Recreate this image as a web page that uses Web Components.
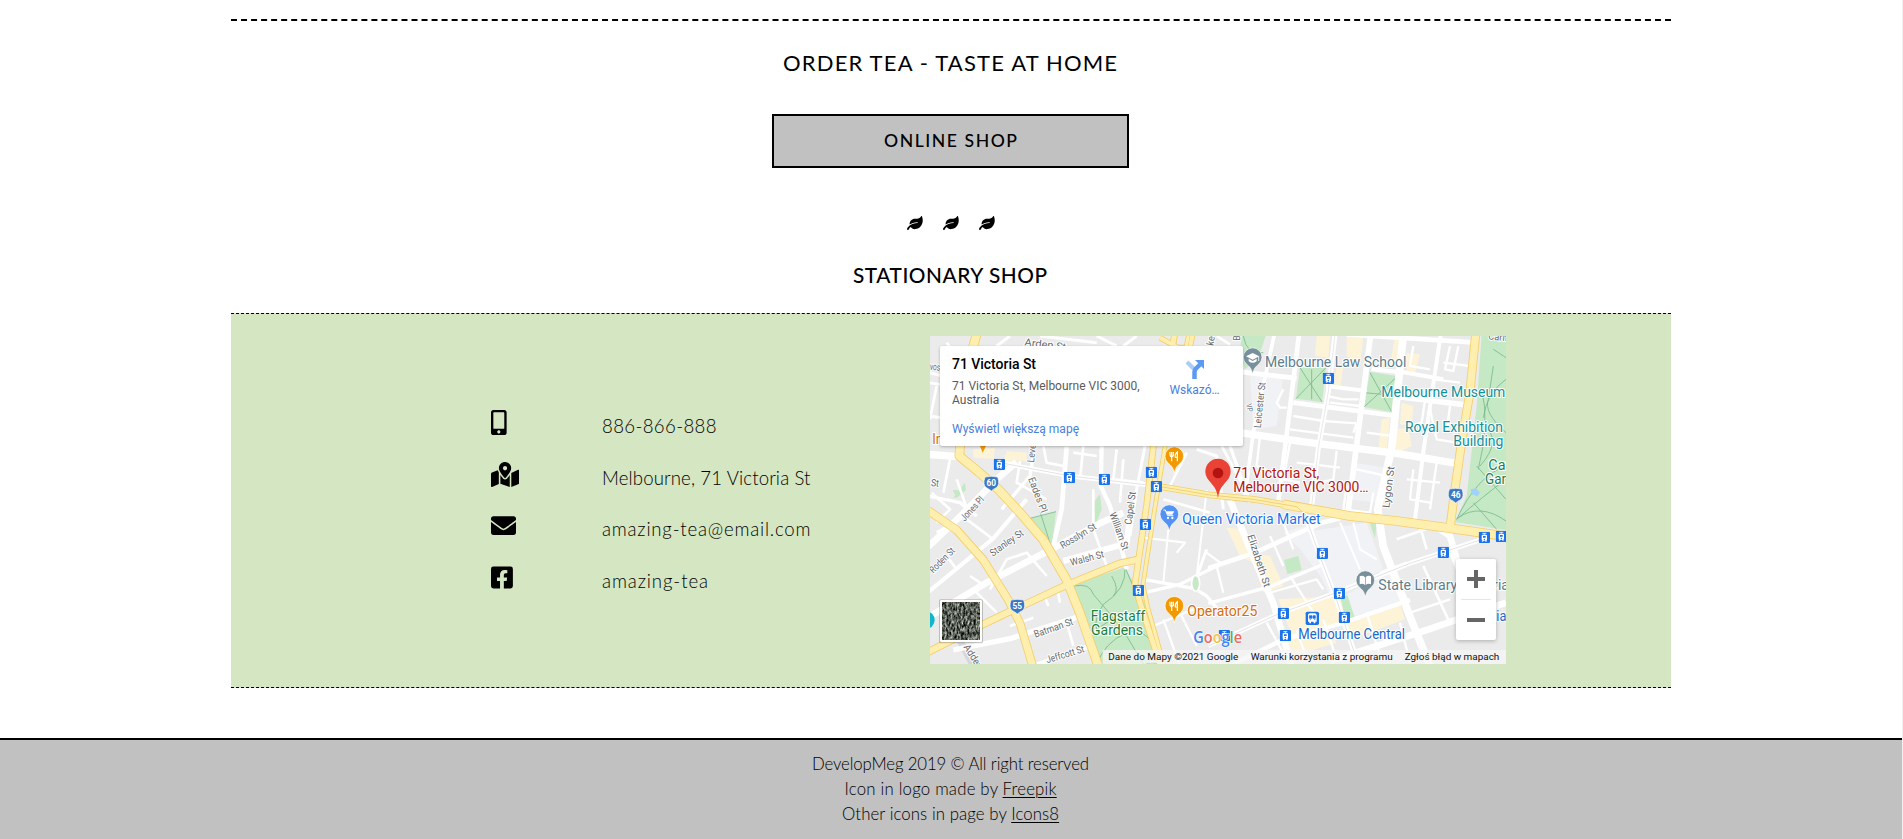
<!DOCTYPE html>
<html lang="en">
<head>
<meta charset="utf-8">
<title>Amazing Tea</title>
<style>
html{background:#fff}
body{margin:0;border-right:1px solid #f0f0f0;height:839px;overflow:hidden;font-family:Lato,"Open Sans",sans-serif;color:#000}
</style>
</head>
<body>
<tea-page></tea-page>
<script>
const define = (name, html, after) => customElements.define(name, class extends HTMLElement {
  connectedCallback() {
    if (this.shadowRoot) return;
    const t = document.createElement('template');
    t.innerHTML = html;
    this.attachShadow({mode: 'open'}).append(t.content.cloneNode(true));
    if (after) after(this, this.shadowRoot);
  }
});

// A single line of text tracked out to a given measure.
define('tea-line', `<style>:host{display:inline-block;white-space:nowrap}span{display:inline-block}</style><span><slot></slot></span>`,
  (host, root) => {
    const span = root.querySelector('span'), n = host.textContent.length, w = +host.getAttribute('measure');
    if (w) span.style.letterSpacing = ((w - span.getBoundingClientRect().width) / (n - 1)) + 'px';
    if (w) span.style.width = w + 'px';
  });

const ICONS = {
  leaf: ['0 0 576 512', 'M546.2 9.7c-5.6-12.5-21.6-13-28.3-1.2C486.9 62.4 431.4 96 368 96h-80C182 96 96 182 96 288c0 7 .8 13.7 1.5 20.5C161.3 262.8 253.4 224 384 224c8.8 0 16 7.2 16 16s-7.2 16-16 16C132.6 256 26 410.1 2.4 468c-6.6 16.3 1.2 34.9 17.5 41.6 16.4 6.8 35-1.1 41.8-17.3 1.5-3.6 20.9-47.9 71.9-90.6 32.4 43.9 94 85.8 174.9 77.2C465.5 467.5 576 326.7 576 154.3c0-50.2-10.8-102.2-29.8-144.6z'],
  phone: ['0 0 320 512', 'M272 0H48C21.5 0 0 21.5 0 48v416c0 26.5 21.5 48 48 48h224c26.5 0 48-21.5 48-48V48c0-26.5-21.5-48-48-48zM160 480c-17.7 0-32-14.3-32-32s14.3-32 32-32 32 14.3 32 32-14.3 32-32 32zm112-108c0 6.6-5.4 12-12 12H60c-6.6 0-12-5.4-12-12V60c0-6.6 5.4-12 12-12h200c6.6 0 12 5.4 12 12v312z'],
  map: ['0 0 576 512', 'M288 0c-69.59 0-126 56.41-126 126 0 56.26 82.35 158.8 113.9 196.02 6.39 7.54 17.82 7.54 24.2 0C331.65 284.8 414 182.26 414 126 414 56.41 357.59 0 288 0zm0 168c-23.2 0-42-18.8-42-42s18.8-42 42-42 42 18.8 42 42-18.8 42-42 42zM20.12 215.95A32.006 32.006 0 0 0 0 245.66v250.32c0 11.32 11.43 19.06 21.94 14.86L160 448V214.92c-8.84-15.98-16.07-31.54-21.25-46.42L20.12 215.95zM288 359.67c-14.07 0-27.38-6.18-36.51-16.96-19.66-23.2-40.57-49.62-59.49-76.72v182l192 64V266c-18.92 27.09-39.82 53.52-59.49 76.72-9.13 10.77-22.44 16.95-36.51 16.95zm266.06-198.51L416 224v288l139.88-55.95A31.996 31.996 0 0 0 576 426.34V176.02c0-11.32-11.43-19.06-21.94-14.86z'],
  mail: ['0 0 512 512', 'M502.3 190.8c3.9-3.1 9.7-.2 9.7 4.7V400c0 26.5-21.5 48-48 48H48c-26.5 0-48-21.5-48-48V195.6c0-5 5.7-7.8 9.7-4.7 22.4 17.4 52.1 39.5 154.1 113.6 21.1 15.4 56.7 47.8 92.2 47.6 35.7.3 72-32.8 92.3-47.6 102-74.1 131.6-96.3 154-113.7zM256 320c23.2.4 56.6-29.2 73.4-41.4 132.7-96.3 142.8-104.7 173.4-128.7 5.8-4.5 9.2-11.5 9.2-18.9v-19c0-26.5-21.5-48-48-48H48c-26.5 0-48 21.5-48 48v19c0 7.4 3.4 14.3 9.2 18.9 30.6 23.9 40.7 32.4 173.4 128.7 16.8 12.2 50.2 41.8 73.4 41.4z'],
  facebook: ['0 0 448 512', 'M400 32H48A48 48 0 0 0 0 80v352a48 48 0 0 0 48 48h137.25V327.69h-63V256h63v-54.64c0-62.15 37-96.48 93.67-96.48 27.14 0 55.52 4.84 55.52 4.84v61h-31.27c-30.81 0-40.42 19.12-40.42 38.73V256h68.78l-11 71.69h-57.78V480H400a48 48 0 0 0 48-48V80a48 48 0 0 0-48-48z']
};
define('tea-icon', `<style>:host{display:block}svg{display:block;height:var(--size,25px);width:auto}</style><svg><path/></svg>`,
  (host, root) => {
    const [box, d] = ICONS[host.getAttribute('name')];
    root.querySelector('svg').setAttribute('viewBox', box);
    root.querySelector('path').setAttribute('d', d);
  });

define('tea-contact', `<style>
:host{display:grid;grid-template-columns:111px auto;height:51.67px;align-items:start}
.t{font-size:18.6px;font-weight:300;line-height:24px;padding-top:4px;color:#000}
</style><div class="i"></div><div class="t"><slot></slot></div>`,
  (host, root) => {
    const icon = document.createElement('tea-icon');
    icon.setAttribute('name', host.getAttribute('icon'));
    root.querySelector('.i').append(icon);
  });

define('tea-footer', `<style>
:host{display:block;box-sizing:border-box;height:101px;border-top:2px solid #000;background:#c1c1c1;padding-top:11px;text-align:center;font-size:16.8px;font-weight:300;line-height:25px;color:#000}
div{height:25px;margin-left:-1px}a{text-decoration:underline;text-underline-offset:2px;text-decoration-thickness:1px}
</style>
<div><tea-line measure="277">DevelopMeg 2019 © All right reserved</tea-line></div>
<div><tea-line measure="212">Icon in logo made by <a>Freepik</a></tea-line></div>
<div><tea-line measure="217">Other icons in page by <a>Icons8</a></tea-line></div>`);

// Map vector layer: 3 drawing units per CSS pixel.
const line = (w, pts, c = '#fff') => `<polyline points="${pts}" fill="none" stroke="${c}" stroke-width="${w}" stroke-linejoin="round"/>`;
const poly = (c, ...l) => l.map(p => `<polygon points="${p}" fill="${c}"/>`).join('');
const tram = [[208,385],[418,425],[523,430],[664,409],[679,452],[646,565],[625,763],[1195,127],[1177,652],[1228,772],[1060,832],[1243,844],[1066,899],[1540,649],[1663,604],[1714,601],[883,899],[665,997]];
const label = (x, y, s, t, c, w, extra = '') => `<text x="${x}" y="${y}" font-size="${s}" fill="${c}" ${w ? `textLength="${w}" lengthAdjust="spacingAndGlyphs"` : ''} ${extra}>${t}</text>`;
const street = (x, y, a, t, w, s = 30) => `<text transform="translate(${x} ${y}) rotate(${a})" font-size="${s}" fill="#65696d" textLength="${w}" lengthAdjust="spacingAndGlyphs">${t}</text>`;
const pin = (x, y, c, g) => `<g transform="translate(${x} ${y})"><path d="M0 50C-3 33-9 27-19 19A28 28 0 1 1 19 19C9 27 3 33 0 50Z" fill="${c}" stroke="#fff" stroke-width="2"/>${g}</g>`;
const shield = (x, y, n) => `<g transform="translate(${x} ${y})"><path d="M-19-19Q0-23 19-19Q27 5 15 13Q5 18 0 23Q-5 18-15 13Q-27 5-19-19Z" fill="#3b78c3" stroke="#fff" stroke-width="2"/><text y="9" text-anchor="middle" font-size="25" font-weight="700" fill="#fff" stroke="none">${n}</text></g>`;
const yellow = [
  [24,'140,-5 130,30 90,330 88,360 145,407 205,460 270,530 340,612 410,732 450,832 505,990'],
  [21,'-5,524 80,582 160,672 235,792 270,862 308,990'],
  [18,'-5,948 40,925 155,867 260,817 410,747 570,682 628,670'],
  [15,'735,-10 670,332 650,507 615,745 630,800 692,990'],
  [9,'775,0 705,332 676,507 639,745 652,810 703,990'],
  [12,'690,5 745,35 780,35 788,-5'],
  [15,'680,450 840,477 970,490 1100,512'],
  [24,'1060,505 1260,540 1400,555 1560,577 1735,602'],
  [22,'1637,-5 1620,167 1595,317 1572,480 1560,577']
];
const fork = '<path d="M-8-14V-2M-3-14V-2M-13-14V-5Q-13 0-8 0T-3-5M-8 0V14M9 14V-14Q1-8 3 2H9" fill="none" stroke="#fff" stroke-width="3.5"/>';
const MAP = `
<svg viewBox="0 0 1728 984" width="576" height="328" font-family="Roboto,sans-serif">
<defs>
<symbol id="tram" viewBox="0 0 34 34"><rect width="34" height="34" rx="4" fill="#1a73e8"/><path d="M11 5H23M17 5V9" stroke="#fff" stroke-width="2.6"/><path fill="#fff" fill-rule="evenodd" d="M12 9H22Q25 9 25 12V25Q25 27 22 27L25 30H21L19 27H15L13 30H9L12 27Q9 27 9 25V12Q9 9 12 9ZM13 13V18H21V13ZM17 21A2 2 0 1 0 17.1 21Z"/></symbol>
<filter id="aerial" x="0" y="0" width="1" height="1" color-interpolation-filters="sRGB"><feTurbulence type="fractalNoise" baseFrequency=".16 .08" numOctaves="4" seed="8"/><feColorMatrix values="1.3 .5 0 0 -.55  1.3 .5 0 0 -.53  1.25 .5 0 0 -.54  0 0 0 0 1"/></filter>
</defs>
<rect width="1728" height="984" fill="#ebebec"/>
${poly('#f1f2f5','1110,590 1310,560 1360,700 1200,780','960,110 1060,120 1040,270 970,280','1270,380 1370,395 1350,500 1250,490','1240,780 1400,700 1440,800 1270,840','1060,590 1150,560 1200,760 1110,640')}
${poly('#fdf3d7','130,340 195,335 190,368 130,365','230,345 290,350 290,375 230,372','225,355 255,350 250,390 222,385','1160,0 1200,0 1195,65 1155,60','1220,85 1240,85 1232,150 1214,148','1250,0 1300,5 1290,80 1250,60','1395,0 1420,0 1412,90 1380,90','1430,50 1470,55 1455,110 1430,105','1415,200 1450,210 1445,270 1410,265','1395,280 1435,275 1445,330 1400,352','1355,250 1380,245 1370,340 1345,340','890,575 940,580 970,680 930,660','960,650 1020,660 1060,750 1000,770','1045,790 1230,780 1260,850 1090,910','1250,860 1410,805 1425,850 1265,910','1070,915 1190,870 1220,920 1090,960')}
${poly('#c5e8c5','935,-3 1008,-3 985,65 945,100 930,50','1110,95 1188,95 1176,198 1098,188','1320,107 1398,120 1386,229 1302,213','1655,-3 1730,-3 1730,582 1575,558 1610,480 1640,210','425,747 585,694 645,800 695,990 520,990','300,547 378,527 365,637','490,500 510,475 515,520 495,570','1318,557 1340,557 1335,607','1062,672 1105,660 1115,702 1072,714','1232,787 1252,777 1275,847 1245,847','70,485 105,440 108,462 82,484','68,462 100,462 80,486')}
<g fill="none" stroke="#7ab98d" stroke-width="2.5">
<path d="M1110 95L1176 198M1188 95L1098 188M1145 100V190M1320 110L1386 229M1398 125L1302 213M1303 170L1390 178M330 527L365 637M300 547L378 527M432 750Q480 740 490 775Q540 830 590 900L640 984M585 694Q590 760 520 805Q490 850 500 880L560 840M545 720Q570 760 550 780M500 990Q520 920 590 890Q640 870 680 940M585 694L660 870M1655 160Q1680 260 1645 400M1728 130Q1670 170 1660 245M1690 90L1675 190Q1660 230 1728 290M1660 270Q1720 310 1650 390M1728 390Q1640 420 1580 550M1640 390L1728 490M1728 430Q1660 480 1580 550M1585 545Q1650 500 1728 555M1630 500L1700 580M1690 40L1728 65"/>
<path d="M940 0Q950 60 1000 50"/>
</g>
<path d="M1622 460L1638 457L1650 470L1642 481L1625 475Z" fill="#9fd3fa"/>
${line(20,'80,895 130,990','#d6d7da')}
${[
[14,'1107,-5 1065,337 1045,497'],[15,'1215,-5 1195,167 1165,337 1145,510'],[17,'1322,-5 1290,247 1255,520'],[23,'1420,-5 1385,337 1343,520 1360,632 1440,842 1500,990'],[12,'1532,-5 1480,347 1455,550'],[11,'1033,-5 970,287 945,480'],
[15,'930,107 1100,127'],[12,'1188,150 1310,165'],[14,'1090,200 1300,227 1400,240'],[16,'1400,182 1610,207'],[14,'1250,-5 1640,20'],[22,'930,290 1140,320 1400,352 1580,382'],[12,'1325,100 1430,110 1540,130'],
[7,'1090,240 1180,255 1280,262 1270,290'],[7,'1080,280 1170,292 1270,305'],[7,'1190,180 1240,190 1285,190'],[7,'1200,200 1290,210'],[7,'1310,290 1390,300'],[7,'1060,160 1040,200 1050,215 1070,215'],[7,'1450,30 1440,90 1500,100'],[7,'1560,30 1545,100 1570,105 1585,30'],[7,'1540,80 1620,90'],[7,'1490,160 1475,260 1440,270'],[7,'1500,220 1520,310 1580,320'],[7,'1510,130 1590,140'],[7,'1560,210 1550,290'],[7,'1080,320 1060,430 1110,440'],[7,'1220,345 1210,430 1170,440'],[7,'1100,380 1230,395'],[7,'1280,400 1370,420'],[7,'1450,400 1440,490 1500,500'],[7,'1520,380 1500,520'],[7,'1430,430 1530,440'],[7,'990,300 980,390 1030,410'],[7,'1250,450 1240,520 1320,530 1330,470'],
[10,'900,330 960,500'],[8,'875,330 940,450'],[8,'860,0 900,25'],[9,'880,520 860,360 800,340'],[8,'770,350 720,450'],[6,'830,462 800,722'],
[14,'835,697 970,652 1170,562 1230,547'],[10,'835,802 1020,752 1175,687'],[14,'835,930 1040,836 1240,762 1440,682 1710,592'],[13,'900,990 1060,910 1220,867 1440,792'],[20,'1200,975 1490,882 1728,800'],[20,'900,492 970,662 1030,802 1085,990'],[15,'1120,522 1170,662 1220,792 1280,970'],[20,'1530,580 1560,600 1600,740'],[8,'1480,690 1560,862'],[8,'1400,610 1500,575'],[8,'1560,650 1650,860'],[7,'1410,860 1440,980'],[7,'1350,710 1430,680'],[7,'1020,600 1060,690'],[7,'1060,560 1090,640'],[7,'1020,770 1160,730 1180,760'],[7,'860,690 880,770'],[7,'1080,720 1150,830'],[7,'1100,880 1130,970'],[7,'1180,850 1220,970'],[7,'1310,830 1350,960'],[6,'1230,560 1290,700'],[6,'1270,560 1290,640 1340,670'],[7,'1010,860 1070,970'],[8,'1470,570 1490,640'],[7,'1580,790 1728,750'],[7,'1440,830 1560,790'],
[20,'-5,632 90,542 200,430 260,378'],[12,'-5,768 190,607 290,490'],[20,'-5,844 170,740 350,647 510,562 580,530'],[18,'400,675 590,622 600,540'],[16,'70,942 240,908 445,842'],[15,'310,990 480,930'],[13,'200,378 420,420 680,450'],[22,'-5,355 85,362'],[14,'410,332 395,520 370,630'],[13,'515,330 512,450 540,510 575,640 590,700'],[9,'645,330 620,460 600,600'],[10,'310,360 300,420 215,520'],[10,'-5,480 90,500 140,540'],[8,'270,375 260,440 350,490'],[8,'340,330 350,380 400,390'],[8,'430,350 500,360'],[8,'450,430 460,330'],[8,'560,340 550,430 640,440'],[8,'580,370 570,500'],[8,'490,460 490,580 530,690'],[8,'180,760 230,670 290,650 350,720'],[8,'120,720 150,740 140,770 200,830'],[8,'340,770 355,810'],[8,'390,800 380,750'],[8,'410,860 430,930'],[8,'240,870 310,845'],[8,'20,560 60,520 5,470'],[8,'80,430 115,530 20,590'],[8,'50,660 80,700'],[9,'-5,110 80,130'],[8,'-5,140 60,150'],[8,'20,150 0,250'],[8,'50,20 80,60'],[9,'-5,240 70,250'],[8,'60,370 40,470'],[8,'110,550 190,610'],[10,'640,730 795,758 830,780 880,840'],[10,'645,770 750,745 860,690'],[9,'790,750 830,640'],[7,'640,605 765,620 740,650'],[7,'670,870 790,820'],[7,'700,850 750,990'],[7,'750,830 800,930'],[7,'830,650 870,680'],[6,'715,580 700,740'],[8,'840,530 700,490'],[9,'240,0 200,30'],[9,'330,0 500,20'],[9,'500,0 560,30'],[9,'620,0 580,30']
].map(r => line(...r)).join('')}
${line(2,'1215,-5 1195,167 1165,337 1145,510','#dedede')}${line(2,'835,930 1040,836 1240,762 1440,682 1710,592','#d5d5d5')}${line(2,'1120,522 1170,662 1220,792 1280,970','#d5d5d5')}${line(2,'200,378 420,420 680,450','#d5d5d5')}
${yellow.map(([w,p]) => line(w + 5, p, '#f4ce6d')).join('')}${yellow.map(([w,p]) => line(w, p, '#feefae')).join('')}
${line(2,'680,450 840,477 970,490 1100,512 1130,540','#e7c159')}
<ellipse cx="797" cy="742" rx="12" ry="24" fill="#c5e8c5" stroke="#fff" stroke-width="5"/>
<circle cx="-12" cy="852" r="26" fill="#12b5cb"/>
<path d="M150 330H168L158 350Z" fill="#f29900"/>
${tram.map(([x,y]) => `<use href="#tram" x="${x-17}" y="${y-17}" width="34" height="34"/>`).join('')}
<g transform="translate(1147 847)"><rect x="-20" y="-20" width="40" height="40" rx="5" fill="#1a73e8"/><path d="M-13-10Q-13-15-7-15H7Q13-15 13-10V10H9V15H4V10H-4V15H-9V10H-13Z" fill="#fff"/><path d="M-9-8H-1V0H-9ZM2-8H9V0H2ZM-8 4H-4M5 4H9" fill="#1a73e8" stroke="#1a73e8" stroke-width="2"/></g>
${shield(184,442,'60')}${shield(262,811,'55')}${shield(1577,478,'46')}
${pin(733,362,'#f29900',fork)}${pin(733,811,'#f29900',fork)}
${pin(718,536,'#5491f5','<path d="M-18-14H-12L-5 3H12" fill="none" stroke="#fff" stroke-width="3"/><path d="M-10-10H15L9 0H-6Z" fill="#fff"/><circle cx="-4" cy="10" r="3.500" fill="#fff"/><circle cx="9" cy="10" r="3.500" fill="#fff"/>')}
${pin(968,65,'#78909c','<path d="M0-14L20-4L0 6L-20-4ZM-12 3L0 10L12 3V11Q0 20-12 11Z" fill="#fff"/><path d="M18-4V10" stroke="#fff" stroke-width="2.5"/>')}
${pin(1306,734,'#78909c','<path d="M-17-13Q-8-17-1-10V13Q-8 7-17 11ZM17-13Q8-17 1-10V13Q8 7 17 11Z" fill="#fff"/>')}
<path d="M864 486C860 455 849 449 835 431A38 38 0 1 1 893 431C879 449 868 455 864 486Z" fill="#ea4335"/><circle cx="864" cy="411" r="16" fill="#b31412"/>
<g paint-order="stroke" stroke="#fff" stroke-width="6" stroke-linejoin="round">
${street(283,28,7,'Arden St',125)}${street(312,380,-84,'Leve',54)}${street(294,428,69,'Eades Pl',112)}${street(604,567,-82,'Capel St',100)}${street(104,557,-47,'Jones Pl',88)}${street(188,662,-35,'Stanley St',116)}${street(10,713,-45,'Roden St',94)}${street(398,639,-31,'Rosslyn St',120)}${street(424,690,-15,'Walsh St',103)}${street(538,533,70,'William St',118)}${street(316,905,-19,'Batman St',122)}${street(352,982,-17,'Jeffcott St',118)}${street(100,933,58,'Adderley',110)}${street(-30,98,6,'Provost',66)}${street(2,450,6,'St',24)}
${street(992,277,-84,'Leicester St',138)}${street(948,205,80,'VP',24,24)}${street(1378,517,-83,'Lygon St',126)}${street(952,599,72,'Elizabeth St',164)}${street(930,14,-88,'B',16)}${street(850,30,-80,'ke',28)}${street(1674,10,6,'Carlton',90)}
${label(1005,93,42,'Melbourne Law School','#607d8b',424)}
${label(1354,184,42,'Melbourne Museum','#129099',372)}
${label(1425,288,42,'Royal Exhibition','#129099',294)}${label(1570,331,42,'Building','#129099',150)}
${label(1675,402,42,'Carlton','#188052',138)}${label(1665,444,42,'Gardens','#188052',150)}
${label(910,426,42,'71 Victoria St,','#b31412',258)}${label(910,468,42,'Melbourne VIC 3000…','#b31412',406)}
${label(757,564,42,'Queen Victoria Market','#1a73e8',415)}
${label(1345,762,42,'State Library Victoria','#607d8b',392)}
${label(1105,909,42,'Melbourne Central','#1967c9',320)}
${label(772,840,42,'Operator25','#d56e0c',210)}
${label(482,856,42,'Flagstaff','#188038',164)}${label(483,898,42,'Gardens','#188038',156)}
${label(7,324,42,'In','#d56e0c',32)}${label(1699,855,42,'ia','#1967c9',30)}
</g>
<text x="790" y="920" font-family="'Open Sans',sans-serif" font-size="46" font-weight="600" textLength="146" lengthAdjust="spacingAndGlyphs" stroke="#fff" stroke-width="3" paint-order="stroke"><tspan fill="#4285f4">G</tspan><tspan fill="#ea6b60">o</tspan><tspan fill="#f5c343">o</tspan><tspan fill="#4285f4">g</tspan><tspan fill="#54ae6c">l</tspan><tspan fill="#ea6b60">e</tspan></text>
<rect x="518" y="942" width="1210" height="42" fill="#f5f5f5" opacity=".75"/>
${label(535,972,29,'Dane do Mapy ©2021 Google','#111',390)}${label(962,972,29,'Warunki korzystania z programu','#111',426)}${label(1424,972,29,'Zgłoś błąd w mapach','#111',284)}
<rect x="27" y="790" width="132" height="132" rx="5" fill="#0003"/><rect x="30" y="792" width="126" height="126" rx="4" fill="#fff"/><rect x="36" y="798" width="114" height="114" filter="url(#aerial)"/>
</svg>`;

define('tea-map', `<style>
:host{display:block;position:relative;width:576px;height:328px;overflow:hidden;font-family:Roboto,sans-serif}
svg{display:block}
.card{position:absolute;left:10px;top:10px;box-sizing:border-box;width:303px;height:100px;padding:10px 12px 0;background:#fff;border-radius:2px;box-shadow:0 1px 3px #0004;display:grid;grid-template-columns:204px 1fr;font-size:12px;line-height:14px;color:#5b5b5b}
.title{font-size:14px;font-weight:500;line-height:16px;color:#000;margin-bottom:7px}
.link{color:#4a80dc}.more{margin-top:15px}
.dir{display:flex;flex-direction:column;align-items:center;padding-top:3px;gap:3px;margin-left:2px}
.zoom{position:absolute;left:526px;top:223px;width:40px;height:81px;background:#fff;border-radius:2px;box-shadow:0 1px 4px #0004;display:grid;grid-template-rows:40px 1px 40px;justify-items:center;align-items:center}
.zoom hr{width:30px;height:1px;border:0;margin:0;background:#e6e6e6}
</style>${MAP}
<div class="card"><div><div class="title"><tea-line measure="84">71 Victoria St</tea-line></div><div><tea-line measure="187.5">71 Victoria St, Melbourne VIC 3000,</tea-line><br>Australia</div><div class="link more"><tea-line measure="127">Wyświetl większą mapę</tea-line></div></div>
<div class="dir link"><svg width="20" height="21" viewBox="0 0 20 21"><path d="M2 3L10 11" stroke="#a9cdf6" stroke-width="4"/><path d="M9.500 20V13Q9.500 11 11 9.500L16 4.500" fill="none" stroke="#5b9af0" stroke-width="4.500"/><path d="M10 1H19V10Z" fill="#5b9af0"/></svg><span>Wskazó…</span></div></div>
<div class="zoom"><svg width="18" height="18"><path d="M0 9H18M9 0V18" stroke="#666" stroke-width="4"/></svg><hr><svg width="18" height="18"><path d="M0 9H18" stroke="#666" stroke-width="4"/></svg></div>`);

define('tea-page', `<style>
:host{display:flex;flex-direction:column;height:839px}
main{width:1440px;margin:0 auto;flex:1;display:flex;flex-direction:column;align-items:center}
.rule{align-self:stretch;height:0;margin-top:19px;border-top:2px dashed #000}
h2,h3{margin:0 2px 0 0;line-height:30px;font-weight:400}
h2{font-size:22px;margin-top:27px}
h3{font-size:20.800px;font-weight:500;margin-top:30px}
.button{box-sizing:border-box;width:357px;height:54px;margin:36px 1px 0 0;border:2px solid #000;background:#c1c1c1;text-align:center;font-size:17.600px;font-weight:500;line-height:50px}
.leaves{display:flex;gap:20.250px;margin-top:48px;--size:14px}
section{box-sizing:border-box;align-self:stretch;height:375px;margin-top:23px;border:1px dashed #000;border-width:1px 0;background:#d5e6c3;display:grid;grid-template-columns:439px 576px;column-gap:0;padding:22px 0 0 260px}
.contacts{padding-top:74px}
</style>
<main><div class="rule"></div>
<h2><tea-line measure="334">ORDER TEA - TASTE AT HOME</tea-line></h2>
<div class="button"><tea-line measure="133">ONLINE SHOP</tea-line></div>
<div class="leaves"><tea-icon name="leaf"></tea-icon><tea-icon name="leaf"></tea-icon><tea-icon name="leaf"></tea-icon></div>
<h3><tea-line measure="194">STATIONARY SHOP</tea-line></h3>
<section><div class="contacts">
<tea-contact icon="phone"><tea-line measure="114.5">886-866-888</tea-line></tea-contact>
<tea-contact icon="map"><tea-line measure="208.500">Melbourne, 71 Victoria St</tea-line></tea-contact>
<tea-contact icon="mail"><tea-line measure="208.500">amazing-tea@email.com</tea-line></tea-contact>
<tea-contact icon="facebook"><tea-line measure="106">amazing-tea</tea-line></tea-contact>
</div><tea-map></tea-map></section></main>
<tea-footer></tea-footer>`);
</script>
</body>
</html>
